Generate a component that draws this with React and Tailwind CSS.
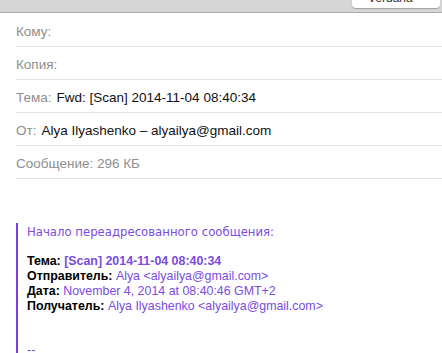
import React from "react";

const sans = { fontFamily: '"Liberation Sans", Arial, sans-serif' };

function HeaderRow({ label, value, first }) {
  return (
    <div
      className={`ml-4 border-b border-[#e2e2e2] pt-[10px] text-[13.5px] leading-4 ${first ? "h-[34px] pt-[11px]" : "h-[33px]"}`}
    >
      <span className="text-[#8e8e8e]">{label}</span>
      {value && <span className="ml-[5px] text-[#111]">{value}</span>}
    </div>
  );
}

function App() {
  return (
    <div className="w-[442px] h-[353px] overflow-hidden bg-white" style={sans}>
      {/* toolbar */}
      <div className="relative h-[13px] bg-[#d6d6d6] border-b border-[#ababab]">
        <div className="absolute -top-[10px] right-[2px] w-[88px] h-[18px] rounded-[4px] bg-white shadow-[0_1px_1px_rgba(0,0,0,0.25)] flex items-end pl-[16px] pb-[3px] text-[12px] leading-[14px] text-[#333]">
          Verdana
        </div>
      </div>

      {/* header fields */}
      <HeaderRow label="Кому:" first />
      <HeaderRow label="Копия:" />
      <HeaderRow label="Тема:" value="Fwd: [Scan] 2014-11-04 08:40:34" />
      <HeaderRow label="От:" value="Alya Ilyashenko – alyailya@gmail.com" />
      <HeaderRow label="Сообщение: 296 КБ" />

      {/* body */}
      <div className="pl-4 pt-[44px]">
        <div className="border-l-2 border-[#7c42e0] pl-[9px] pt-[2px] text-[12.4px] leading-[14.7px] text-[#7a4ce0]">
          <div style={{ fontFamily: '"DejaVu Sans", Verdana, sans-serif', fontSize: "11.7px" }}>
            Начало переадресованного сообщения:
          </div>
          <div className="h-[14.7px]" />
          <div>
            <b className="text-black">Тема: </b>
            <b>[Scan] 2014-11-04 08:40:34</b>
          </div>
          <div>
            <b className="text-black">Отправитель: </b>Alya &lt;alyailya@gmail.com&gt;
          </div>
          <div>
            <b className="text-black">Дата: </b>November 4, 2014 at 08:40:46 GMT+2
          </div>
          <div>
            <b className="text-black">Получатель: </b>Alya Ilyashenko &lt;alyailya@gmail.com&gt;
          </div>
          <div className="h-[29.4px]" />
          <div>--</div>
        </div>
      </div>
    </div>
  );
}

export default App;
